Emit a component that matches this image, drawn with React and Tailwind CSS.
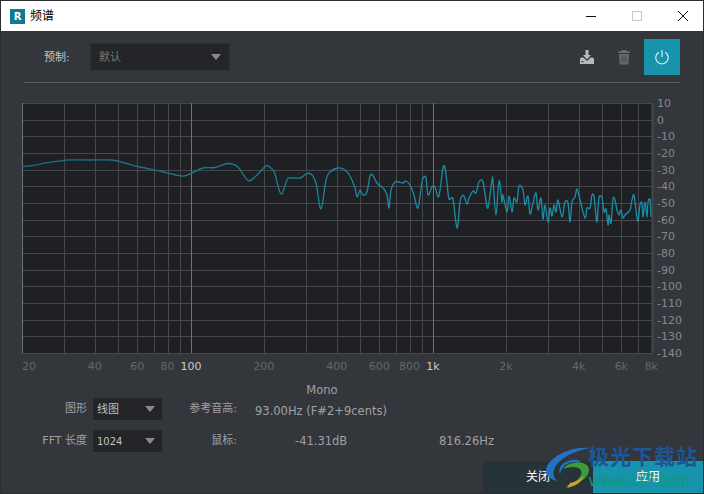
import React from "react";

const FONT = { fontFamily: '"DejaVu Sans", "Noto Sans CJK SC", sans-serif' };

const PLOT = { left: 22, right: 652, top: 103, bottom: 353 };

// frequency -> x on the log axis
const fx = (f) => 191 + Math.log10(f / 100) * 242;
const dbY = (db) => PLOT.top + ((10 - db) / 150) * (PLOT.bottom - PLOT.top);

const FREQ_LINES = [20, 30, 40, 50, 60, 70, 80, 90, 100, 200, 300, 400, 500, 600, 700, 800, 900, 1000, 2000, 3000, 4000, 5000, 6000, 7000];
const FREQ_LABELS = [
  ["20", 20], ["40", 40], ["60", 60], ["80", 80], ["100", 100], ["200", 200], ["400", 400], ["600", 600],
  ["800", 800], ["1k", 1000], ["2k", 2000], ["4k", 4000], ["6k", 6000], ["8k", 8000],
];
const DB_LABELS = Array.from({ length: 16 }, (_, i) => 10 - i * 10);

const CURVE = [
  [22, 166.5], [33, 165.5], [45, 163], [60, 161], [68, 160], [90, 160], [112, 160], [125, 163], [140, 167], [160, 171],
  [176, 175], [184, 176], [192, 173], [203, 168], [215, 167.5], [228, 163.5], [238, 167], [248, 180.5], [256, 176],
  [266, 166], [272, 169], [275, 174], [281, 194], [287, 180], [290, 178], [300, 178], [306, 174], [311, 174], [316, 183],
  [321, 209], [326, 180], [330, 172], [338, 168], [345, 170], [350, 176], [355, 188], [357, 197], [360, 190], [363, 195],
  [367, 192], [370, 176], [373, 175.5], [377, 183], [384, 189], [387, 195], [389, 208], [391, 190], [395, 182], [399, 182],
  [403, 183], [406, 181], [410, 185], [414, 195], [418, 208], [422, 182], [424, 177], [426, 178], [428, 195], [432, 187],
  [435, 187], [438, 197], [440, 190], [443, 168], [445, 168], [447, 183], [449, 199], [453, 199], [457, 228], [460, 202],
  [462, 196], [464, 196], [467, 204], [469, 198], [473, 191], [476, 193], [479, 182], [483, 182], [487, 207], [489, 202],
  [492, 180], [493, 181], [496, 215], [499, 181], [502, 202], [503, 195], [507, 212], [509, 196], [512, 212], [514, 198],
  [517, 202], [519, 186], [523, 190], [525, 205], [528, 196], [530, 214], [533, 203], [536, 193], [538, 210], [541, 198],
  [543, 219], [545, 205], [548, 222], [550, 208], [552, 216], [554, 205], [556, 212], [558, 200], [562, 217], [565, 202],
  [568, 203], [570, 222], [572, 202], [575, 197], [577, 189], [580, 200], [585, 218], [587, 208], [590, 208], [592, 195],
  [594, 196], [595, 205], [597, 222], [599, 198], [602, 198], [604, 212], [606, 209], [608, 225], [609, 215], [611, 223],
  [613, 199], [615, 200], [617, 210], [619, 215], [621, 210], [623, 218], [625, 215], [630, 210], [632, 200], [634, 195],
  [636, 210], [638, 221], [640, 205], [642, 203], [643, 217], [645, 202], [647, 217], [648, 202], [650, 200], [651, 217],
];

// smooth the measured points a little
const smoothPath = (pts) => {
  let d = `M${pts[0][0]} ${pts[0][1]}`;
  for (let i = 0; i < pts.length - 1; i++) {
    const p0 = pts[i - 1] || pts[i];
    const p1 = pts[i];
    const p2 = pts[i + 1];
    const p3 = pts[i + 2] || p2;
    const c1 = [p1[0] + (p2[0] - p0[0]) / 6, p1[1] + (p2[1] - p0[1]) / 6];
    const c2 = [p2[0] - (p3[0] - p1[0]) / 6, p2[1] - (p3[1] - p1[1]) / 6];
    d += `C${c1[0]} ${c1[1]} ${c2[0]} ${c2[1]} ${p2[0]} ${p2[1]}`;
  }
  return d;
};

const Spectrum = () => (
  <svg width="664" height="282" viewBox="20 96 664 282" className="block ml-[19px] mt-[13px]">
    <defs>
      <linearGradient id="curve" gradientUnits="userSpaceOnUse" x1="22" x2="652" y1="0" y2="0">
        <stop offset="0" stopColor="#1a6b7a" />
        <stop offset="0.3" stopColor="#1a7b8c" />
        <stop offset="0.6" stopColor="#1a8ba2" />
        <stop offset="1" stopColor="#1a8ea6" />
      </linearGradient>
    </defs>
    <rect x={PLOT.left} y={PLOT.top} width={PLOT.right - PLOT.left} height={PLOT.bottom - PLOT.top} fill="#1e2024" />
    {DB_LABELS.map((db) => (
      <line key={db} x1={PLOT.left} x2={PLOT.right} y1={Math.round(dbY(db)) + 0.5} y2={Math.round(dbY(db)) + 0.5} stroke="#45474d" />
    ))}
    {FREQ_LINES.map((f) => {
      const major = f === 100 || f === 1000 || f === 20;
      const x = Math.round(fx(f)) + 0.5;
      return <line key={f} x1={x} x2={x} y1={PLOT.top} y2={PLOT.bottom} stroke={major ? "#6f7176" : "#45474d"} />;
    })}
    <line x1="652.5" x2="652.5" y1={PLOT.top} y2={PLOT.bottom} stroke="#45474d" strokeWidth="2" />
    <path d={smoothPath(CURVE)} fill="none" stroke="url(#curve)" strokeWidth="1.3" strokeLinejoin="round" />
    <g style={FONT} fontSize="11">
      {DB_LABELS.map((db) => (
        <text key={db} x="657" y={dbY(db) + 4} fill="#85878b">{db}</text>
      ))}
      {FREQ_LABELS.map(([label, f]) => {
        const major = f === 100 || f === 1000;
        const anchor = f === 20 ? "start" : f === 8000 ? "end" : "middle";
        const x = f === 20 ? 22 : f === 8000 ? 658 : fx(f);
        return (
          <text key={label} x={x} y="370" textAnchor={anchor} fill={major ? "#c8c9cb" : "#65676b"}>{label}</text>
        );
      })}
    </g>
  </svg>
);

const Select = ({ value, className, textClass }) => (
  <div className={`flex items-center justify-between bg-[#232528] ${className}`}>
    <span className={textClass}>{value}</span>
    <span className="w-0 h-0 border-x-[5px] border-x-transparent border-t-[6px] border-t-[#8a8b8e]" />
  </div>
);

const SwirlLogo = () => (
  <svg width="48" height="44" viewBox="0 0 48 44">
    <path d="M46 3C30 1 10 9 3 21c-3 7 1 13 10 15-5-5-5-13 3-20C24 9 35 5 46 3Z" fill="#2272c4" />
    <path d="M16 29c-3-7 4-13 12-14 6-1 9 1 8 3-4-2-9-1-13 1-4 2-6 6-7 10Z" fill="#2272c4" />
    <path d="M19 24c4-6 15-8 22-5 6 3 5 10-1 15-5 4-12 7-19 8 6-3 14-7 16-12 2-5-2-8-8-8-4 0-7 1-10 2Z" fill="#3f9a3a" />
    <path d="M26 38c5-1 11-4 14-7-2 5-7 10-17 12l3-5Z" fill="#c9a227" />
  </svg>
);

export default function App() {
  return (
    <div
      className="relative w-[704px] h-[494px] flex flex-col border border-[#2b2d31] bg-[#33363b] text-[11.5px] text-[#a0a1a4] overflow-hidden"
      style={FONT}
    >
      {/* title bar */}
      <div className="h-[30px] shrink-0 bg-white flex items-center pl-[9px] text-black">
        <div className="w-[15px] h-[15px] bg-[#14788c] flex items-center justify-center text-white text-[10px] font-bold">R</div>
        <span className="ml-[5px] text-[12px]">频谱</span>
        <div className="ml-auto flex items-center">
          <svg width="46" height="16" viewBox="0 0 46 16"><path d="M3 8.5h10" stroke="#111" /></svg>
          <svg width="46" height="16" viewBox="0 0 46 16"><rect x="3.5" y="3.5" width="9" height="9" fill="none" stroke="#c8c8c8" /></svg>
          <svg width="28" height="16" viewBox="0 0 28 16"><path d="M3 3l10 10M13 3L3 13" stroke="#111" /></svg>
        </div>
      </div>

      {/* preset row */}
      <div className="mx-[23px] h-[52px] shrink-0 pt-[8px] border-b border-[#5a5c60]">
        <div className="flex items-center h-9">
          <span className="pl-[20px] pt-[3px] w-[66px] text-[11px] text-[#c4c5c7]">预制:</span>
          <Select value="默认" className="w-[140px] h-7 px-2 pr-[8px] border border-[#2b2d30]" textClass="pt-[3px] text-[#77797c] text-[11px]" />
          <div className="ml-auto flex items-center">
            <svg width="16" height="16" viewBox="0 0 16 16" className="mr-[22px]">
              <path d="M6.5 1h3v5h2.5L8 10.5 4 6h2.5Z" fill="#b8b9bb" />
              <path d="M1 9.5l1.5-1h1.8L8 12l3.7-3.5h1.8l1.5 1V15H1Z" fill="#b8b9bb" />
              <rect x="2.5" y="12" width="2" height="1.2" fill="#33363b" />
            </svg>
            <svg width="14" height="16" viewBox="0 0 14 16" className="mr-[13px]">
              <path d="M1 2.5h12V4H1ZM4.5 1h5v1.5h-5Z" fill="#6a6c70" />
              <path d="M2 5h10l-.8 10.5H2.8Z" fill="#6a6c70" />
              <path d="M5 6.5v7M7 6.5v7M9 6.5v7" stroke="#33363b" strokeWidth=".7" />
            </svg>
            <div className="w-9 h-9 bg-[#1793ab] flex items-center justify-center">
              <svg width="16" height="16" viewBox="0 0 16 16" fill="none" stroke="#e4f3f6" strokeWidth="1.1">
                <path d="M8 1v7" />
                <path d="M4.8 3.2a6.3 6.3 0 1 0 6.4 0" />
              </svg>
            </div>
          </div>
        </div>
      </div>

      <Spectrum />

      {/* readouts */}
      <div className="w-[642px] text-center h-4 leading-4 mt-[4px]">Mono</div>
      <div className="flex flex-col gap-[10px]">
        <div className="flex items-center h-[22px]">
          <span className="w-[86px] pt-[1px] text-right text-[11px]">图形</span>
          <Select value="线图" className="ml-[6px] w-[69px] h-[22px] pl-1 pr-[7px]" textClass="pt-[3px] text-[11px] text-[#c0c1c3]" />
          <span className="w-[75px] pt-[1px] text-right text-[11px]">参考音高:</span>
          <span className="ml-[18px] pt-[5px]">93.00Hz (F#2+9cents)</span>
        </div>
        <div className="flex items-center h-[22px]">
          <span className="w-[86px] text-right text-[11px]">FFT 长度</span>
          <Select value="1024" className="ml-[6px] w-[69px] h-[22px] pl-1 pr-[7px]" textClass="pt-[1px] text-[10px] text-[#c0c1c3]" />
          <span className="w-[75px] text-right text-[11px]">鼠标:</span>
          <span className="ml-[58px] w-[144px] pt-[2px]">-41.31dB</span>
          <span className="pt-[2px]">816.26Hz</span>
        </div>
      </div>

      {/* dialog buttons */}
      <div className="mt-auto flex justify-end text-[12px] text-white">
        <div className="w-[110px] h-[32px] bg-[#263338] flex items-center justify-center">关闭</div>
        <div className="w-[110px] h-[32px] bg-[#1793ab] flex items-center justify-center">应用</div>
      </div>

      {/* download site watermark */}
      <div className="absolute left-[543px] top-[443px] w-[158px] h-[48px]">
        <div className="absolute left-0 top-[1px]"><SwirlLogo /></div>
        <div className="absolute left-[44px] top-[-1px] text-[21px] leading-[28px] font-bold tracking-[1px] text-[#1b5696] whitespace-nowrap">极光下载站</div>
        <div
          className="absolute left-[45px] top-[26px] text-[16.5px] leading-[20px] text-[#0f9a74] whitespace-nowrap"
          style={{ fontFamily: '"Liberation Sans", sans-serif' }}
        >
          www.xz7.com
        </div>
      </div>
    </div>
  );
}
